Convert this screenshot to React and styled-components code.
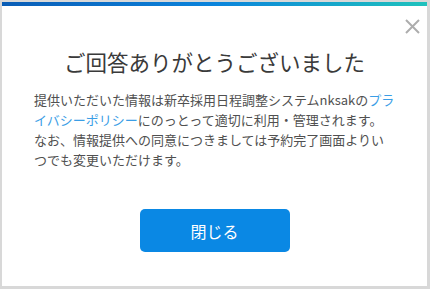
import React from 'react';
import styled, { createGlobalStyle } from 'styled-components';

const GlobalStyle = createGlobalStyle`
  html, body {
    margin: 0;
    padding: 0;
    background: #d8d8d8;
  }
  body {
    font-family: "Noto Sans CJK JP", "Noto Sans", sans-serif;
  }
`

const Page = styled.div`
  width: 430px;
  height: 289px;
  padding: 2px 3px 3px 2px;
  box-sizing: border-box;
`

const Modal = styled.div`
  position: relative;
  height: 100%;
  background: #fff;
  display: flex;
  flex-direction: column;
  align-items: center;
`

const TopBar = styled.div`
  align-self: stretch;
  height: 4px;
  background: linear-gradient(90deg, #0a5db6 0%, #0b84dc 50%, #1fc2bc 100%);
`

const CloseButton = styled.button`
  position: absolute;
  top: 15px;
  right: 5px;
  width: 19px;
  height: 19px;
  padding: 0;
  border: none;
  background: none;
  cursor: pointer;
  display: flex;
  align-items: center;
  justify-content: center;
`

const Title = styled.h1`
  margin: 41px 0 0;
  font-size: 21.5px;
  line-height: 30px;
  font-weight: 400;
  color: #3a3a3a;
`

const Body = styled.p`
  margin: 13px 0 0;
  width: 361px;
  font-size: 13px;
  line-height: 20px;
  color: #505050;
`

const Link = styled.a`
  color: #3b9ee6;
  text-decoration: none;
`

const Button = styled.button`
  margin-top: 39px;
  width: 150px;
  height: 43px;
  border: none;
  border-radius: 5px;
  background: #0a88e4;
  color: #fff;
  font-family: inherit;
  font-size: 16px;
  cursor: pointer;
`

const App = () => {
  return (
    <Page>
      <GlobalStyle />
      <Modal>
        <TopBar />
        <CloseButton aria-label="close">
          <svg width="15" height="15" viewBox="0 0 15 15">
            <path d="M1 1 L14 14 M14 1 L1 14" stroke="#adadad" strokeWidth="2" />
          </svg>
        </CloseButton>
        <Title>ご回答ありがとうございました</Title>
        <Body>
          提供いただいた情報は新卒採用日程調整システムnksakの<Link href="#">プライバシーポリシー</Link>にのっとって適切に利用・管理されます。なお、情報提供への同意につきましては予約完了画面よりいつでも変更いただけます。
        </Body>
        <Button>閉じる</Button>
      </Modal>
    </Page>
  );
}

export default App;
